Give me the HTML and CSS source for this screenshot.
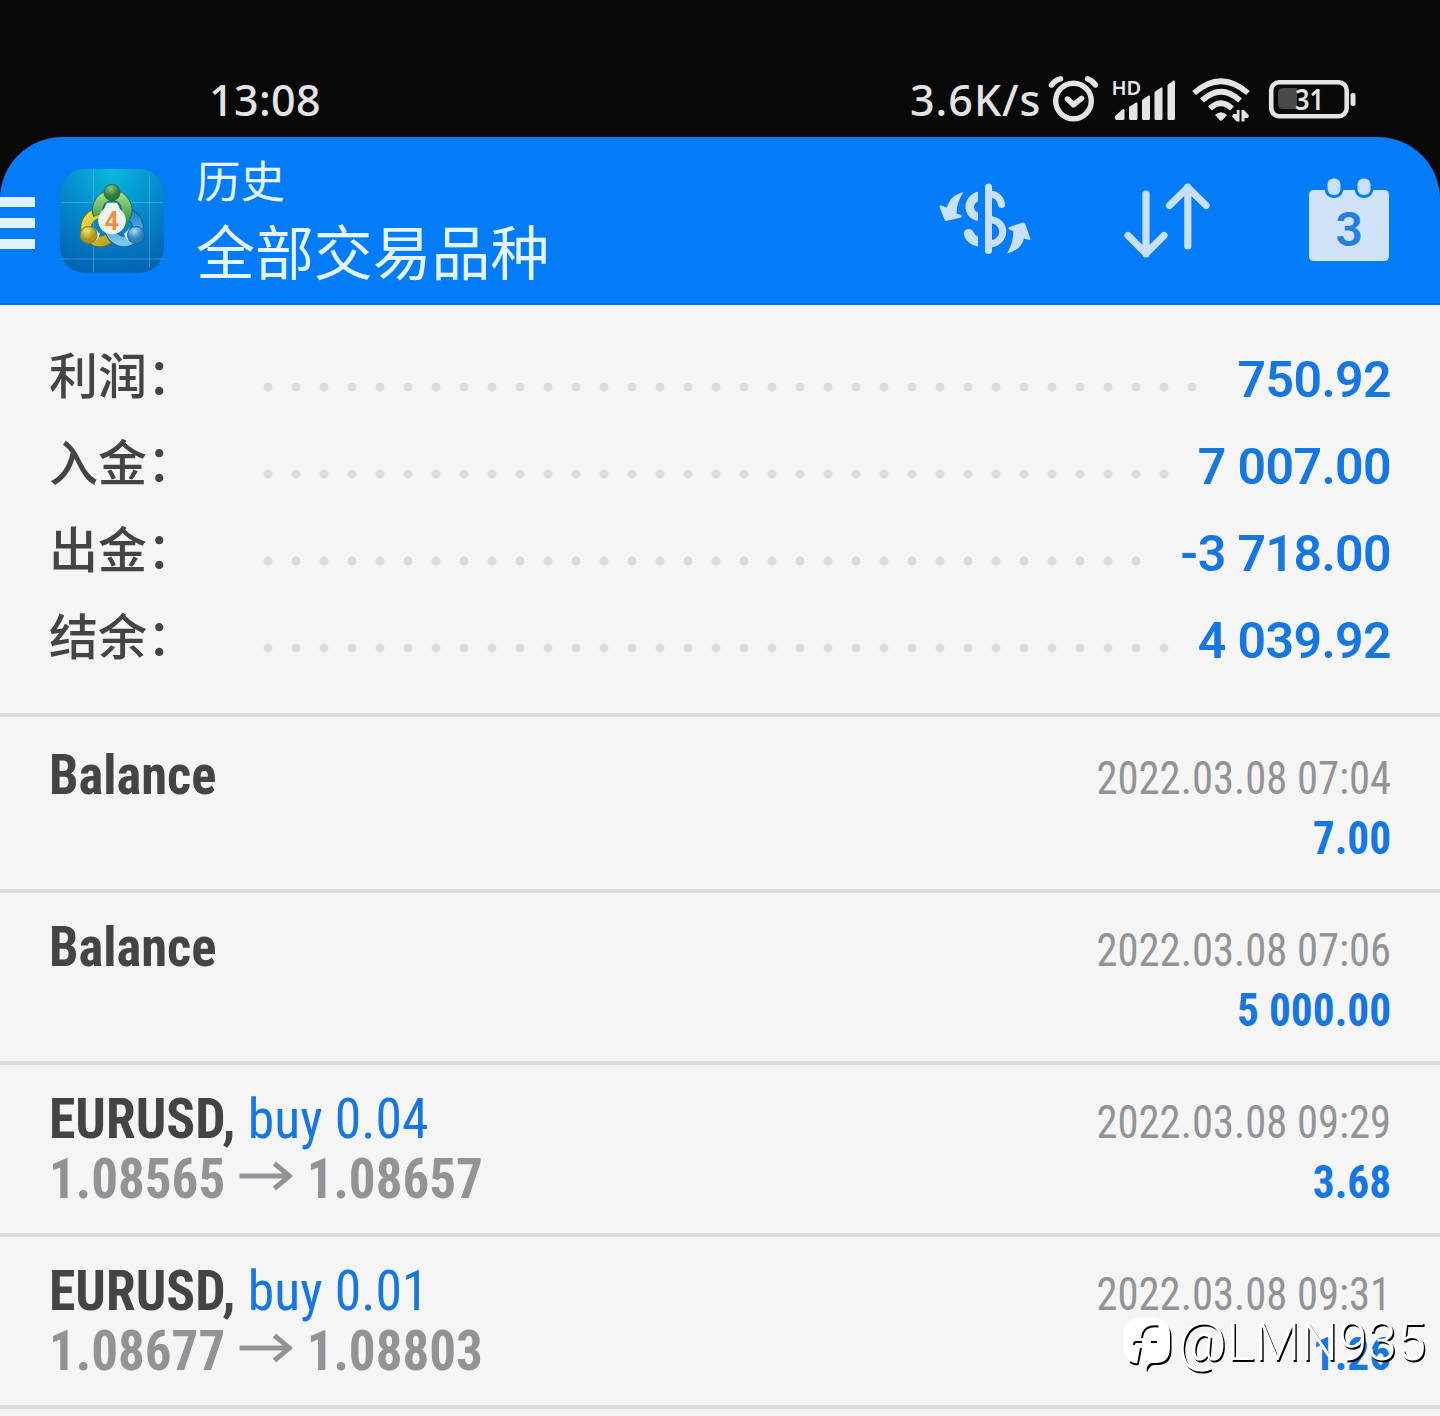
FILE: index.html
```html
<!DOCTYPE html>
<html lang="zh-CN">
<head>
<meta charset="utf-8">
<title>历史</title>
<link rel="stylesheet" href="styles.css">
</head>
<body>
<div class="screen">
  <div class="status">
    <span class="clock">13:08</span>
    <div class="status-right">
      <span class="speed">3.6K/s</span>
      <svg class="indicators" width="320" height="60" viewBox="1040 70 320 60" fill="none" stroke="#e4e4e4">
        <g stroke-width="5.4" stroke-linecap="round" stroke-linejoin="round">
          <circle cx="1073.500" cy="101" r="17.800"/>
          <path d="M1051.500 85 Q1055 80 1060.500 78.800M1087.500 78.800Q1093 81 1095.500 85M1067.500 99l6 5.800 8-6.500" />
        </g>
        <text class="hd" x="1111.500" y="94.500">HD</text>
        <g fill="#e4e4e4" stroke="none">
          <path d="M1115 118v-2l8-7q1.500-.5 1.500 1.500v8q0 1.500-1.500 1.500h-6.500q-1.500 0-1.500-2zM1129 107l7-4.500q1.500-.5 1.500 1v15q0 1.500-1.500 1.500h-5.500q-1.500 0-1.500-1.500zM1142 100l6.500-4.500q1.500-.5 1.500 1v22q0 1.500-1.500 1.500h-5q-1.500 0-1.500-1.500zM1154.500 92l6.500-4.500q1.500-.5 1.500 1v30q0 1.500-1.500 1.500h-5q-1.500 0-1.500-1.500zM1167.500 85l6-4.500q1.500-.5 1.500 1v37q0 1.500-1.500 1.500h-4.500q-1.500 0-1.500-1.500z"/>
          <path d="M1215 115q6-5.500 12 0l-4.500 5q-1.500 1.500-3 0z"/>
          <path d="M1236.800 110h2.700v11.500h-3l-4.500-5 1-2.500h3.800zM1241.500 121.500v-11.500h2.500l5 5.500-1 2.500h-3.500v3.500z"/>
        </g>
        <path d="M1194 93q27-23.500 54 0M1202 100.500q19-17.500 38 0M1210 108.500q11-10.500 22 0" stroke-width="5.600"/>
        <rect x="1271.200" y="82.200" width="75.500" height="34" rx="8" stroke-width="4.600"/>
        <path d="M1283 88h14v21h-14q-5 0-5-5V93q0-5 5-5z" fill="#484848" stroke="none"/>
        <rect x="1350.500" y="93" width="5" height="13" rx="2" fill="#e4e4e4" stroke="none"/>
        <text class="level" x="1295" y="110" textLength="29" lengthAdjust="spacingAndGlyphs">31</text>
      </svg>
    </div>
  </div>

  <header class="bar">
    <div class="menu"><i></i><i></i><i></i></div>
    <svg class="app" width="104" height="104" viewBox="60 169 104 104">
      <defs>
        <radialGradient id="tile" cx=".5" cy="0" r="1"><stop offset="0" stop-color="#08b9de"/><stop offset=".5" stop-color="#0589cc"/><stop offset="1" stop-color="#0464b4"/></radialGradient>
        <linearGradient id="green" x2="0" y2="1"><stop stop-color="#9bd887"/><stop offset="1" stop-color="#278d3c"/></linearGradient>
        <linearGradient id="gold" x2="1" y2="1"><stop stop-color="#e7db46"/><stop offset="1" stop-color="#b4a122"/></linearGradient>
        <linearGradient id="blue" x2="0" y2="1"><stop stop-color="#2387cf"/><stop offset="1" stop-color="#79c5ef"/></linearGradient>
        <radialGradient id="ballg" cx=".4" cy=".25"><stop stop-color="#8bc786"/><stop offset="1" stop-color="#2c7d37"/></radialGradient>
        <radialGradient id="bally" cx=".4" cy=".25"><stop stop-color="#f1e778"/><stop offset="1" stop-color="#aa941c"/></radialGradient>
        <radialGradient id="ballb" cx=".4" cy=".25"><stop stop-color="#a6dbf8"/><stop offset="1" stop-color="#297fc0"/></radialGradient>
      </defs>
      <rect x="60" y="169" width="104" height="104" rx="25" fill="url(#tile)"/>
      <path d="M93.500 170v102M149.500 175v92M61 202.500h102M61 259h102" stroke="#63c6ec" stroke-opacity=".45"/>
      <g fill="none">
        <circle cx="100" cy="227.500" r="14" stroke="#566f35" stroke-width="11.500"/>
        <circle cx="100" cy="227.500" r="14" stroke="url(#gold)" stroke-width="9.500"/>
        <circle cx="124" cy="227.500" r="14" stroke="#175c8c" stroke-width="11.500"/>
        <circle cx="124" cy="227.500" r="14" stroke="url(#blue)" stroke-width="9.500"/>
        <path d="M98.500 215A14.500 14.500 0 1 1 125 217" stroke="#286b43" stroke-width="11.500"/>
        <path d="M98.500 214.500A14.500 14.500 0 1 1 125 216.500L122 225" stroke="url(#green)" stroke-width="9.500"/>
      </g>
      <path d="M107 203h10l3 6h-16zM94 228l6 6-3 6-6-5zM130 228l-6 6 3 6 6-5z" fill="#eef6e8"/>
      <circle cx="112" cy="192.500" r="8" fill="url(#ballg)" stroke="#286b43"/>
      <circle cx="88.500" cy="235" r="8.500" fill="url(#bally)" stroke="#807b28"/>
      <circle cx="136" cy="235" r="8.500" fill="url(#ballb)" stroke="#1b6197"/>
      <circle cx="112" cy="220.500" r="13.800" fill="#eff2f3"/>
      <text class="four" x="104.500" y="229.500">4</text>
    </svg>
    <div class="titles">
      <div class="title">历史</div>
      <div class="subtitle">全部交易品种</div>
    </div>
    <svg class="actions" width="460" height="110" viewBox="930 165 460 110" fill="none" stroke="#c8e0fa" stroke-linecap="round" stroke-linejoin="round">
      <path d="M988.500 187v63.500" stroke-width="7"/>
      <path d="M988.500 194c7 0 12 3.500 13 10.500M988.500 219.500c19 0 19 24 0 24.500" stroke-width="7"/>
      <path d="M978 191.500v10q-4 1.500-4 5.500t4 5.500V221c-8-2-12.500-6.500-12.500-14s4.500-13 12.500-15.500z" fill="#c8e0fa" stroke="none"/>
      <path d="M978 246.500v-10q-3.500-1.500-4.500-4.500-1.500-3.500-5.500-3t-4.200 4.500c1 7 6.200 11.500 14.200 13z" fill="#c8e0fa" stroke="none"/>
      <path d="M963.500 192c-9 2-14.500 7.500-16.500 15.500l-6-2q-2 .2-1.300 2l4.800 12q1 1.700 3 1.300l13.500-3.300q1.500-1 0-2.500l-4.500-1.500q0-11 7-21.500zM1007 253.500c9-2 15-7 17-15l5.500 1.500q1.500-.5.700-2l-5-14q-1-1.700-3-1.300l-13 4.300q-1.500 1 0 2.500l4 1.500q.5 11-6.200 22.500z" fill="#c8e0fa" stroke="none"/>
      <path d="M1146 194v60M1128 235.500l18 18 18-18M1187.800 246v-59M1169.500 205.500l18.300-18 18.300 18" stroke-width="7.200"/>
      <path d="M1314 190h10.500q2 8 9.500 8t9.500-8h11q2 8 9.500 8t9.500-8h10.500q5 0 5 5v61q0 5-5 5h-70q-5 0-5-5v-61q0-5 5-5z" fill="#d0e3f9" stroke="none"/>
      <rect x="1327.500" y="178.500" width="13" height="16.500" rx="6" fill="#c8e0fa" stroke="none"/>
      <rect x="1357.500" y="178.500" width="13" height="16.500" rx="6" fill="#c8e0fa" stroke="none"/>
      <text class="day" x="1335.500" y="245.500">3</text>
    </svg>
  </header>

  <section class="summary">
    <div class="sum"><span class="label">利润：</span><span class="dots" style="--dots:34"></span><span class="value">750.92</span></div>
    <div class="sum"><span class="label">入金：</span><span class="dots" style="--dots:33"></span><span class="value">7 007.00</span></div>
    <div class="sum"><span class="label">出金：</span><span class="dots" style="--dots:32"></span><span class="value">-3 718.00</span></div>
    <div class="sum"><span class="label">结余：</span><span class="dots" style="--dots:33"></span><span class="value">4 039.92</span></div>
  </section>

  <main class="deals">
    <article class="deal first">
      <div class="left"><div class="name"><b>Balance</b></div></div>
      <div class="right"><div class="date">2022.03.08 07:04</div><div class="amount">7.00</div></div>
    </article>
    <article class="deal">
      <div class="left"><div class="name"><b>Balance</b></div></div>
      <div class="right"><div class="date">2022.03.08 07:06</div><div class="amount">5 000.00</div></div>
    </article>
    <article class="deal">
      <div class="left">
        <div class="name trade"><b>EURUSD,</b> <span>buy 0.04</span></div>
        <div class="prices"><span>1.08565</span><svg width="56" height="30" viewBox="0 0 56 30"><path d="M0 15h52M37 2.500 53 15 37 27.500"/></svg><span>1.08657</span></div>
      </div>
      <div class="right"><div class="date">2022.03.08 09:29</div><div class="amount">3.68</div></div>
    </article>
    <article class="deal">
      <div class="left">
        <div class="name trade"><b>EURUSD,</b> <span>buy 0.01</span></div>
        <div class="prices"><span>1.08677</span><svg width="56" height="30" viewBox="0 0 56 30"><path d="M0 15h52M37 2.500 53 15 37 27.500"/></svg><span>1.08803</span></div>
      </div>
      <div class="right"><div class="date">2022.03.08 09:31</div><div class="amount">1.26</div></div>
    </article>
  </main>

  <div class="watermark">
    <svg width="56" height="60" viewBox="1120 1314 56 60">
      <path d="M1141 1321h14q16.500 2 16.500 16v13q0 15-14 15h-4q-4 1-6.500 7.500l-1-8.500z" fill="#000"/>
      <path d="M1139 1318h15q16 1 16 17v12q0 16-14 16h-4q-4 0-6 7l-2-7h-6q-14-1-14-15v-15q0-14 15-15z" fill="#fff"/>
      <path d="M1158.500 1326.500q-15-2-16.500 11.500M1134 1345q0-3 2-3h6M1151 1342h6M1141 1348l-3 16q-4 1-8-2" fill="none" stroke="#000" stroke-width="1.900"/>
    </svg>
    <span>@LMN935</span>
  </div>
</div>
</body>
</html>
```
FILE: styles.css
```css
* { box-sizing: border-box; }
body { margin: 0; background: #080808; }
.screen {
  position: relative;
  width: 1440px;
  height: 1416px;
  overflow: hidden;
  display: flex;
  flex-direction: column;
  font-family: Roboto, "Noto Sans CJK SC", sans-serif;
}
svg { display: block; flex: none; }

.status {
  height: 137px;
  padding: 70px 80px 7px 209px;
  display: flex;
  justify-content: space-between;
  align-items: center;
  color: #e4e4e4;
  font: 550 43px/60px "Noto Sans", sans-serif;
}
.status-right { display: flex; align-items: center; }
.clock { letter-spacing: .4px; }
.speed { width: 130px; white-space: nowrap; letter-spacing: 1px; }
.hd { font: 600 20px "Noto Sans", sans-serif; fill: #e4e4e4; stroke: none; }
.level { font: 600 28px "Noto Sans", sans-serif; fill: #e4e4e4; stroke: none; }

.bar {
  height: 168px;
  flex: none;
  display: flex;
  align-items: flex-start;
  padding-right: 50px;
  background: #057cf7;
  border-bottom: 2px solid #0870da;
  border-radius: 62px 62px 0 0;
}
.menu {
  width: 35px;
  margin: 60px 25px 0 0;
  display: flex;
  flex-direction: column;
  gap: 11.500px;
}
.menu i { height: 9.500px; background: #dff2fe; }
.app { margin-top: 32px; }
.four { font: 700 25px Roboto, sans-serif; fill: #ef9140; }
.titles { margin-left: 32px; color: #e4f5ff; font-family: "Noto Sans CJK SC", sans-serif; font-weight: 400; white-space: nowrap; }
.title { margin-top: 13px; font-size: 44.500px; line-height: 58px; }
.subtitle { font-size: 58.900px; line-height: 83px; }
.actions { margin: 28px 0 0 auto; }
.day { font: 600 48px Roboto, sans-serif; fill: #247fe3; stroke: none; }

.summary {
  height: 412px;
  flex: none;
  padding: 31px 49px 0 50px;
  background: #f5f5f5;
  border-bottom: 4px solid #dadada;
}
.sum { display: flex; align-items: center; height: 87px; }
.label { width: 205px; margin: -14px 0 0 -1px; color: #444; font: 500 49px/87px "Noto Sans CJK SC", sans-serif; }
.dots {
  width: calc(var(--dots) * 28px);
  height: 10px;
  margin-top: 15px;
  background: radial-gradient(circle at center, #dcdcdc 4px, transparent 5px) 0 0 / 28px 10px;
}
.value { margin-left: auto; color: #1677e3; font-size: 50px; font-weight: 650; letter-spacing: -.6px; }

/* Row texts are set slightly narrower than the condensed face. */
.deals { flex: 1; background: #f5f5f5; font-family: "Roboto Condensed", Roboto, sans-serif; font-stretch: 75%; }
.deal {
  height: 172px;
  padding: 24px 49px 0 49px;
  display: flex;
  justify-content: space-between;
  border-bottom: 4px solid #dadada;
  white-space: nowrap;
}
.deal.first { height: 176px; padding-top: 28px; }
.name { font-size: 56px; line-height: 60px; color: #1677e3; transform: scaleX(.938); transform-origin: 0 50%; }
.name.trade { transform: scaleX(.958); }
.name b { color: #444; }
.prices { display: flex; align-items: center; gap: 15px; color: #929397; font-size: 56px; line-height: 60px; font-weight: 700; transform: scaleX(.947); transform-origin: 0 50%; }
.prices svg { margin-top: -6px; }
.prices path { fill: none; stroke: #929397; stroke-width: 5; }
.right { text-align: right; padding-top: 3px; font-size: 46px; line-height: 60px; }
.date { color: #929397; transform: scaleX(.926); transform-origin: 100% 50%; }
.amount { color: #1677e3; font-weight: 700; transform: scaleX(.942); transform-origin: 100% 50%; }

.watermark { position: absolute; left: 1120px; top: 1314px; display: flex; }
.watermark span { margin-left: 2px; color: #fff; font: 300 53px/56px Roboto, sans-serif; text-shadow: 1.500px 2px 0 #000; }
```
